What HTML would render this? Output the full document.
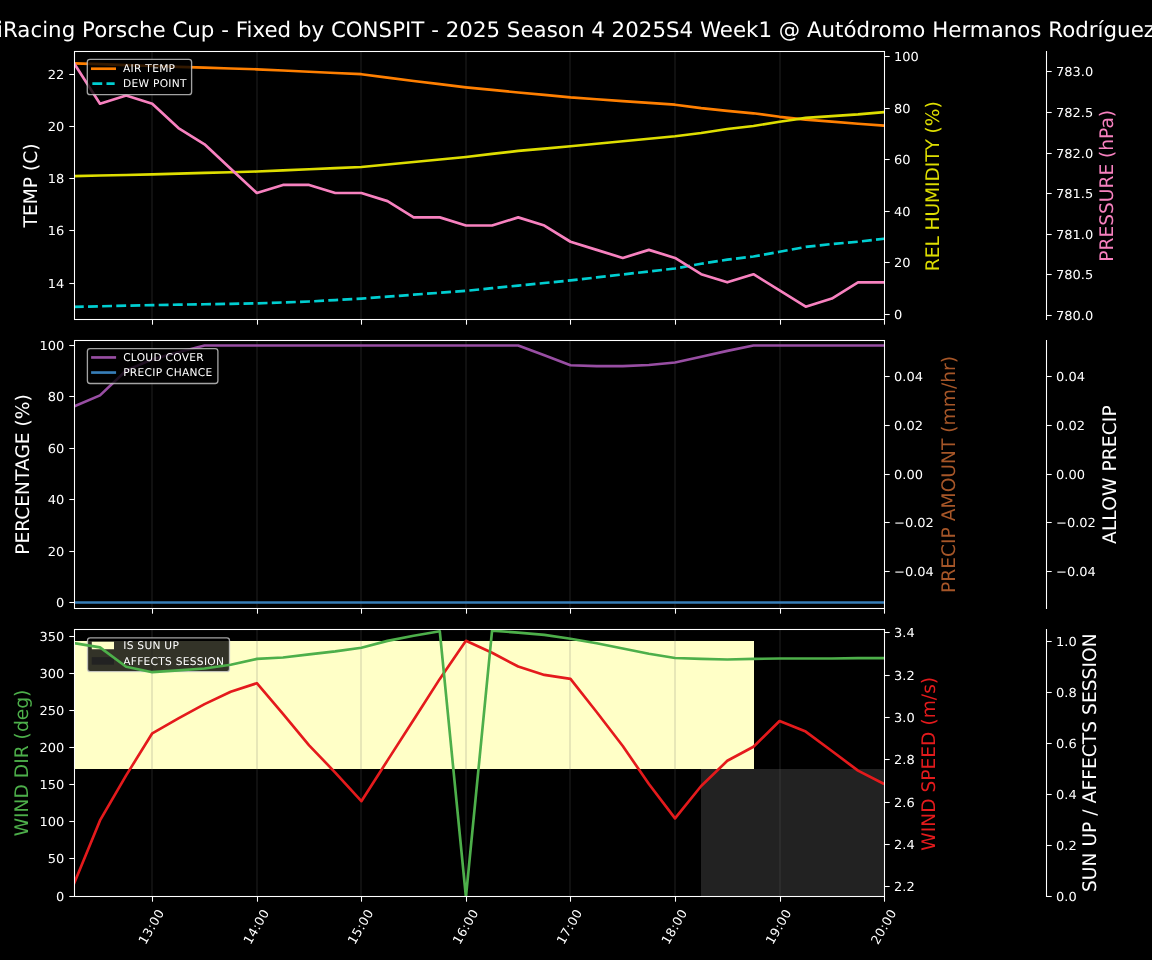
<!DOCTYPE html>
<html lang="en"><head><meta charset="utf-8"><title>Weather forecast chart</title>
<style>html,body{margin:0;padding:0;background:#000;}svg{display:block;will-change:transform;}text{text-rendering:geometricPrecision;}</style></head>
<body>
<svg width="1152" height="960" viewBox="0 0 1152 960" font-family="'DejaVu Sans','Liberation Sans',sans-serif">
<rect width="1152" height="960" fill="#000"/>
<defs>
<clipPath id="c0"><rect x="74.5" y="51.5" width="810.0" height="268.0"/></clipPath>
<clipPath id="c1"><rect x="74.5" y="340.5" width="810.0" height="268.0"/></clipPath>
<clipPath id="c2"><rect x="74.5" y="629.5" width="810.0" height="267.0"/></clipPath>
</defs>
<text x="-3.00" y="36.80" font-size="21.33" fill="#fff" text-anchor="start" textLength="1158" lengthAdjust="spacing">iRacing Porsche Cup - Fixed by CONSPIT - 2025 Season 4 2025S4 Week1 @ Autódromo Hermanos Rodríguez</text>
<line x1="152.00" y1="51.50" x2="152.00" y2="319.50" stroke="rgba(105,105,105,0.155)" stroke-width="2" />
<line x1="257.00" y1="51.50" x2="257.00" y2="319.50" stroke="rgba(105,105,105,0.155)" stroke-width="2" />
<line x1="361.00" y1="51.50" x2="361.00" y2="319.50" stroke="rgba(105,105,105,0.155)" stroke-width="2" />
<line x1="466.00" y1="51.50" x2="466.00" y2="319.50" stroke="rgba(105,105,105,0.155)" stroke-width="2" />
<line x1="570.00" y1="51.50" x2="570.00" y2="319.50" stroke="rgba(105,105,105,0.155)" stroke-width="2" />
<line x1="675.00" y1="51.50" x2="675.00" y2="319.50" stroke="rgba(105,105,105,0.155)" stroke-width="2" />
<line x1="780.00" y1="51.50" x2="780.00" y2="319.50" stroke="rgba(105,105,105,0.155)" stroke-width="2" />
<g clip-path="url(#c0)">
<polyline points="73.87,63.30 100.01,64.20 126.15,65.10 152.28,66.00 178.42,66.83 204.56,67.65 230.69,68.47 256.83,69.30 282.97,70.52 309.11,71.75 335.25,72.98 361.38,74.20 387.52,77.60 413.66,81.00 439.80,84.15 465.93,87.30 492.07,89.90 518.21,92.50 544.35,94.95 570.48,97.40 596.62,99.23 622.76,101.05 648.89,102.88 675.03,104.70 701.17,108.10 727.31,110.90 753.44,113.30 779.58,116.80 805.72,119.60 831.86,121.70 858.00,123.75 884.13,125.70" fill="none" stroke="#ff7f00" stroke-width="2.67" stroke-linejoin="round" />
<polyline points="73.87,306.90 100.01,306.30 126.15,305.70 152.28,305.10 178.42,304.68 204.56,304.25 230.69,303.82 256.83,303.40 282.97,302.45 309.11,301.50 335.25,300.05 361.38,298.60 387.52,296.65 413.66,294.70 439.80,292.75 465.93,290.80 492.07,288.20 518.21,285.60 544.35,283.00 570.48,280.40 596.62,277.42 622.76,274.45 648.89,271.48 675.03,268.50 701.17,263.75 727.31,259.60 753.44,256.50 779.58,251.80 805.72,246.90 831.86,244.00 858.00,241.70 884.13,238.75" fill="none" stroke="#00ced1" stroke-width="2.67" stroke-linejoin="round" stroke-dasharray="9.87 4.27"/>
<polyline points="73.87,176.10 100.01,175.53 126.15,174.97 152.28,174.40 178.42,173.68 204.56,172.95 230.69,172.22 256.83,171.50 282.97,170.38 309.11,169.25 335.25,168.12 361.38,167.00 387.52,164.50 413.66,162.00 439.80,159.50 465.93,157.00 492.07,153.95 518.21,150.90 544.35,148.57 570.48,146.25 596.62,143.75 622.76,141.25 648.89,138.75 675.03,136.25 701.17,132.95 727.31,129.00 753.44,126.00 779.58,121.70 805.72,117.85 831.86,116.10 858.00,114.40 884.13,112.10" fill="none" stroke="#dede00" stroke-width="2.67" stroke-linejoin="round" />
<polyline points="73.87,63.08 100.01,103.69 126.15,95.57 152.28,103.69 178.42,128.05 204.56,144.29 230.69,168.66 256.83,193.02 282.97,184.90 309.11,184.90 335.25,193.02 361.38,193.02 387.52,201.14 413.66,217.38 439.80,217.38 465.93,225.51 492.07,225.51 518.21,217.38 544.35,225.51 570.48,241.75 596.62,249.87 622.76,257.99 648.89,249.87 675.03,257.99 701.17,274.23 727.31,282.35 753.44,274.23 779.58,290.48 805.72,306.72 831.86,298.60 858.00,282.35 884.13,282.35" fill="none" stroke="#f781bf" stroke-width="2.67" stroke-linejoin="round" />
</g>
<rect x="74.5" y="51.5" width="810.0" height="268.0" fill="none" stroke="#fff" stroke-width="1.07"/>
<line x1="1046.50" y1="51.00" x2="1046.50" y2="320.00" stroke="#fff" stroke-width="1.07" />
<line x1="152.50" y1="319.50" x2="152.50" y2="324.70" stroke="#fff" stroke-width="1.07" />
<line x1="257.50" y1="319.50" x2="257.50" y2="324.70" stroke="#fff" stroke-width="1.07" />
<line x1="361.50" y1="319.50" x2="361.50" y2="324.70" stroke="#fff" stroke-width="1.07" />
<line x1="466.50" y1="319.50" x2="466.50" y2="324.70" stroke="#fff" stroke-width="1.07" />
<line x1="570.50" y1="319.50" x2="570.50" y2="324.70" stroke="#fff" stroke-width="1.07" />
<line x1="675.50" y1="319.50" x2="675.50" y2="324.70" stroke="#fff" stroke-width="1.07" />
<line x1="780.50" y1="319.50" x2="780.50" y2="324.70" stroke="#fff" stroke-width="1.07" />
<line x1="884.50" y1="319.50" x2="884.50" y2="324.70" stroke="#fff" stroke-width="1.07" />
<line x1="69.30" y1="283.50" x2="74.50" y2="283.50" stroke="#fff" stroke-width="1.07" />
<text transform="translate(64.37,288.10) scale(1,0.96)" font-size="13" fill="#fff" text-anchor="end">14</text>
<line x1="69.30" y1="230.50" x2="74.50" y2="230.50" stroke="#fff" stroke-width="1.07" />
<text transform="translate(64.37,235.10) scale(1,0.96)" font-size="13" fill="#fff" text-anchor="end">16</text>
<line x1="69.30" y1="178.50" x2="74.50" y2="178.50" stroke="#fff" stroke-width="1.07" />
<text transform="translate(64.37,183.10) scale(1,0.96)" font-size="13" fill="#fff" text-anchor="end">18</text>
<line x1="69.30" y1="126.50" x2="74.50" y2="126.50" stroke="#fff" stroke-width="1.07" />
<text transform="translate(64.37,131.10) scale(1,0.96)" font-size="13" fill="#fff" text-anchor="end">20</text>
<line x1="69.30" y1="74.50" x2="74.50" y2="74.50" stroke="#fff" stroke-width="1.07" />
<text transform="translate(64.37,79.10) scale(1,0.96)" font-size="13" fill="#fff" text-anchor="end">22</text>
<line x1="884.50" y1="314.50" x2="889.70" y2="314.50" stroke="#fff" stroke-width="1.07" />
<text transform="translate(894.03,319.10) scale(1,0.96)" font-size="13" fill="#fff" text-anchor="start">0</text>
<line x1="884.50" y1="262.50" x2="889.70" y2="262.50" stroke="#fff" stroke-width="1.07" />
<text transform="translate(894.03,267.10) scale(1,0.96)" font-size="13" fill="#fff" text-anchor="start">20</text>
<line x1="884.50" y1="211.50" x2="889.70" y2="211.50" stroke="#fff" stroke-width="1.07" />
<text transform="translate(894.03,216.10) scale(1,0.96)" font-size="13" fill="#fff" text-anchor="start">40</text>
<line x1="884.50" y1="159.50" x2="889.70" y2="159.50" stroke="#fff" stroke-width="1.07" />
<text transform="translate(894.03,164.10) scale(1,0.96)" font-size="13" fill="#fff" text-anchor="start">60</text>
<line x1="884.50" y1="108.50" x2="889.70" y2="108.50" stroke="#fff" stroke-width="1.07" />
<text transform="translate(894.03,113.10) scale(1,0.96)" font-size="13" fill="#fff" text-anchor="start">80</text>
<line x1="884.50" y1="56.50" x2="889.70" y2="56.50" stroke="#fff" stroke-width="1.07" />
<text transform="translate(894.03,61.10) scale(1,0.96)" font-size="13" fill="#fff" text-anchor="start">100</text>
<line x1="1046.50" y1="315.50" x2="1051.70" y2="315.50" stroke="#fff" stroke-width="1.07" />
<text transform="translate(1056.03,320.10) scale(1,0.96)" font-size="13" fill="#fff" text-anchor="start">780.0</text>
<line x1="1046.50" y1="274.50" x2="1051.70" y2="274.50" stroke="#fff" stroke-width="1.07" />
<text transform="translate(1056.03,279.10) scale(1,0.96)" font-size="13" fill="#fff" text-anchor="start">780.5</text>
<line x1="1046.50" y1="234.50" x2="1051.70" y2="234.50" stroke="#fff" stroke-width="1.07" />
<text transform="translate(1056.03,239.10) scale(1,0.96)" font-size="13" fill="#fff" text-anchor="start">781.0</text>
<line x1="1046.50" y1="193.50" x2="1051.70" y2="193.50" stroke="#fff" stroke-width="1.07" />
<text transform="translate(1056.03,198.10) scale(1,0.96)" font-size="13" fill="#fff" text-anchor="start">781.5</text>
<line x1="1046.50" y1="153.50" x2="1051.70" y2="153.50" stroke="#fff" stroke-width="1.07" />
<text transform="translate(1056.03,158.10) scale(1,0.96)" font-size="13" fill="#fff" text-anchor="start">782.0</text>
<line x1="1046.50" y1="112.50" x2="1051.70" y2="112.50" stroke="#fff" stroke-width="1.07" />
<text transform="translate(1056.03,117.10) scale(1,0.96)" font-size="13" fill="#fff" text-anchor="start">782.5</text>
<line x1="1046.50" y1="71.50" x2="1051.70" y2="71.50" stroke="#fff" stroke-width="1.07" />
<text transform="translate(1056.03,76.10) scale(1,0.96)" font-size="13" fill="#fff" text-anchor="start">783.0</text>
<text x="37.00" y="185.50" font-size="18.67" fill="#fff" text-anchor="middle" transform="rotate(-90 37.00 185.50)" >TEMP (C)</text>
<text x="939.00" y="186.25" font-size="18.67" fill="#dede00" text-anchor="middle" transform="rotate(-90 939.00 186.25)" letter-spacing="-0.094">REL HUMIDITY (%)</text>
<text x="1113.00" y="185.80" font-size="18.67" fill="#f781bf" text-anchor="middle" transform="rotate(-90 1113.00 185.80)" letter-spacing="-0.04">PRESSURE (hPa)</text>
<rect x="87.30" y="59.40" width="104.30" height="35.20" rx="2.7" ry="2.7" fill="rgba(0,0,0,0.8)" stroke="rgba(204,204,204,0.8)" stroke-width="1.33"/>
<line x1="92.35" y1="68.70" x2="114.65" y2="68.70" stroke="#ff7f00" stroke-width="2.67" stroke-linecap="square"/>
<text x="123.05" y="71.75" font-size="10.67" fill="#fff" text-anchor="start" letter-spacing="0.27">AIR TEMP</text>
<line x1="92.35" y1="83.60" x2="114.65" y2="83.60" stroke="#00ced1" stroke-width="2.67" stroke-dasharray="9.87 4.27"/>
<text x="123.05" y="86.65" font-size="10.67" fill="#fff" text-anchor="start" letter-spacing="0.27">DEW POINT</text>
<line x1="152.00" y1="340.50" x2="152.00" y2="608.50" stroke="rgba(105,105,105,0.155)" stroke-width="2" />
<line x1="257.00" y1="340.50" x2="257.00" y2="608.50" stroke="rgba(105,105,105,0.155)" stroke-width="2" />
<line x1="361.00" y1="340.50" x2="361.00" y2="608.50" stroke="rgba(105,105,105,0.155)" stroke-width="2" />
<line x1="466.00" y1="340.50" x2="466.00" y2="608.50" stroke="rgba(105,105,105,0.155)" stroke-width="2" />
<line x1="570.00" y1="340.50" x2="570.00" y2="608.50" stroke="rgba(105,105,105,0.155)" stroke-width="2" />
<line x1="675.00" y1="340.50" x2="675.00" y2="608.50" stroke="rgba(105,105,105,0.155)" stroke-width="2" />
<line x1="780.00" y1="340.50" x2="780.00" y2="608.50" stroke="rgba(105,105,105,0.155)" stroke-width="2" />
<g clip-path="url(#c1)">
<polyline points="73.87,406.41 100.01,395.36 126.15,370.43 152.28,359.38 178.42,352.18 204.56,345.50 230.69,345.50 256.83,345.50 282.97,345.50 309.11,345.50 335.25,345.50 361.38,345.50 387.52,345.50 413.66,345.50 439.80,345.50 465.93,345.50 492.07,345.50 518.21,345.50 544.35,355.27 570.48,365.29 596.62,366.06 622.76,366.06 648.89,365.03 675.03,362.46 701.17,356.81 727.31,350.90 753.44,345.50 779.58,345.50 805.72,345.50 831.86,345.50 858.00,345.50 884.13,345.50" fill="none" stroke="#984ea3" stroke-width="2.67" stroke-linejoin="round" />
<polyline points="73.87,602.50 884.13,602.50" fill="none" stroke="#377eb8" stroke-width="2.67" stroke-linejoin="round" />
</g>
<rect x="74.5" y="340.5" width="810.0" height="268.0" fill="none" stroke="#fff" stroke-width="1.07"/>
<line x1="1046.50" y1="340.00" x2="1046.50" y2="609.00" stroke="#fff" stroke-width="1.07" />
<line x1="152.50" y1="608.50" x2="152.50" y2="613.70" stroke="#fff" stroke-width="1.07" />
<line x1="257.50" y1="608.50" x2="257.50" y2="613.70" stroke="#fff" stroke-width="1.07" />
<line x1="361.50" y1="608.50" x2="361.50" y2="613.70" stroke="#fff" stroke-width="1.07" />
<line x1="466.50" y1="608.50" x2="466.50" y2="613.70" stroke="#fff" stroke-width="1.07" />
<line x1="570.50" y1="608.50" x2="570.50" y2="613.70" stroke="#fff" stroke-width="1.07" />
<line x1="675.50" y1="608.50" x2="675.50" y2="613.70" stroke="#fff" stroke-width="1.07" />
<line x1="780.50" y1="608.50" x2="780.50" y2="613.70" stroke="#fff" stroke-width="1.07" />
<line x1="884.50" y1="608.50" x2="884.50" y2="613.70" stroke="#fff" stroke-width="1.07" />
<line x1="69.30" y1="602.50" x2="74.50" y2="602.50" stroke="#fff" stroke-width="1.07" />
<text transform="translate(64.37,607.10) scale(1,0.96)" font-size="13" fill="#fff" text-anchor="end">0</text>
<line x1="69.30" y1="551.50" x2="74.50" y2="551.50" stroke="#fff" stroke-width="1.07" />
<text transform="translate(64.37,556.10) scale(1,0.96)" font-size="13" fill="#fff" text-anchor="end">20</text>
<line x1="69.30" y1="499.50" x2="74.50" y2="499.50" stroke="#fff" stroke-width="1.07" />
<text transform="translate(64.37,504.10) scale(1,0.96)" font-size="13" fill="#fff" text-anchor="end">40</text>
<line x1="69.30" y1="448.50" x2="74.50" y2="448.50" stroke="#fff" stroke-width="1.07" />
<text transform="translate(64.37,453.10) scale(1,0.96)" font-size="13" fill="#fff" text-anchor="end">60</text>
<line x1="69.30" y1="396.50" x2="74.50" y2="396.50" stroke="#fff" stroke-width="1.07" />
<text transform="translate(64.37,401.10) scale(1,0.96)" font-size="13" fill="#fff" text-anchor="end">80</text>
<line x1="69.30" y1="345.50" x2="74.50" y2="345.50" stroke="#fff" stroke-width="1.07" />
<text transform="translate(64.37,350.10) scale(1,0.96)" font-size="13" fill="#fff" text-anchor="end">100</text>
<line x1="884.50" y1="571.50" x2="889.70" y2="571.50" stroke="#fff" stroke-width="1.07" />
<text transform="translate(894.03,576.10) scale(1,0.96)" font-size="13" fill="#fff" text-anchor="start">−0.04</text>
<line x1="884.50" y1="522.50" x2="889.70" y2="522.50" stroke="#fff" stroke-width="1.07" />
<text transform="translate(894.03,527.10) scale(1,0.96)" font-size="13" fill="#fff" text-anchor="start">−0.02</text>
<line x1="884.50" y1="474.50" x2="889.70" y2="474.50" stroke="#fff" stroke-width="1.07" />
<text transform="translate(894.03,479.10) scale(1,0.96)" font-size="13" fill="#fff" text-anchor="start">0.00</text>
<line x1="884.50" y1="425.50" x2="889.70" y2="425.50" stroke="#fff" stroke-width="1.07" />
<text transform="translate(894.03,430.10) scale(1,0.96)" font-size="13" fill="#fff" text-anchor="start">0.02</text>
<line x1="884.50" y1="376.50" x2="889.70" y2="376.50" stroke="#fff" stroke-width="1.07" />
<text transform="translate(894.03,381.10) scale(1,0.96)" font-size="13" fill="#fff" text-anchor="start">0.04</text>
<line x1="1046.50" y1="571.50" x2="1051.70" y2="571.50" stroke="#fff" stroke-width="1.07" />
<text transform="translate(1056.03,576.10) scale(1,0.96)" font-size="13" fill="#fff" text-anchor="start">−0.04</text>
<line x1="1046.50" y1="522.50" x2="1051.70" y2="522.50" stroke="#fff" stroke-width="1.07" />
<text transform="translate(1056.03,527.10) scale(1,0.96)" font-size="13" fill="#fff" text-anchor="start">−0.02</text>
<line x1="1046.50" y1="474.50" x2="1051.70" y2="474.50" stroke="#fff" stroke-width="1.07" />
<text transform="translate(1056.03,479.10) scale(1,0.96)" font-size="13" fill="#fff" text-anchor="start">0.00</text>
<line x1="1046.50" y1="425.50" x2="1051.70" y2="425.50" stroke="#fff" stroke-width="1.07" />
<text transform="translate(1056.03,430.10) scale(1,0.96)" font-size="13" fill="#fff" text-anchor="start">0.02</text>
<line x1="1046.50" y1="376.50" x2="1051.70" y2="376.50" stroke="#fff" stroke-width="1.07" />
<text transform="translate(1056.03,381.10) scale(1,0.96)" font-size="13" fill="#fff" text-anchor="start">0.04</text>
<text x="29.00" y="474.50" font-size="18.67" fill="#fff" text-anchor="middle" transform="rotate(-90 29.00 474.50)" >PERCENTAGE (%)</text>
<text x="955.00" y="474.50" font-size="18.67" fill="#a65628" text-anchor="middle" transform="rotate(-90 955.00 474.50)" >PRECIP AMOUNT (mm/hr)</text>
<text x="1115.60" y="474.60" font-size="18.67" fill="#fff" text-anchor="middle" transform="rotate(-90 1115.60 474.60)" letter-spacing="0.08">ALLOW PRECIP</text>
<rect x="87.40" y="348.60" width="130.50" height="34.90" rx="2.7" ry="2.7" fill="rgba(0,0,0,0.8)" stroke="rgba(204,204,204,0.8)" stroke-width="1.33"/>
<line x1="92.45" y1="357.45" x2="114.75" y2="357.45" stroke="#984ea3" stroke-width="2.67" stroke-linecap="square"/>
<text x="123.15" y="360.80" font-size="10.67" fill="#fff" text-anchor="start" letter-spacing="0.27">CLOUD COVER</text>
<line x1="92.45" y1="372.55" x2="114.75" y2="372.55" stroke="#377eb8" stroke-width="2.67" stroke-linecap="square"/>
<text x="123.15" y="375.80" font-size="10.67" fill="#fff" text-anchor="start" letter-spacing="0.27">PRECIP CHANCE</text>
<rect x="74" y="641" width="680" height="128" fill="#ffffc7"/>
<rect x="701" y="769" width="183.5" height="127.5" fill="#222"/>
<line x1="152.00" y1="629.50" x2="152.00" y2="896.50" stroke="rgba(105,105,105,0.155)" stroke-width="2" />
<line x1="257.00" y1="629.50" x2="257.00" y2="896.50" stroke="rgba(105,105,105,0.155)" stroke-width="2" />
<line x1="361.00" y1="629.50" x2="361.00" y2="896.50" stroke="rgba(105,105,105,0.155)" stroke-width="2" />
<line x1="466.00" y1="629.50" x2="466.00" y2="896.50" stroke="rgba(105,105,105,0.155)" stroke-width="2" />
<line x1="570.00" y1="629.50" x2="570.00" y2="896.50" stroke="rgba(105,105,105,0.155)" stroke-width="2" />
<line x1="675.00" y1="629.50" x2="675.00" y2="896.50" stroke="rgba(105,105,105,0.155)" stroke-width="2" />
<line x1="780.00" y1="629.50" x2="780.00" y2="896.50" stroke="rgba(105,105,105,0.155)" stroke-width="2" />
<rect x="87.50" y="637.80" width="142.00" height="33.80" rx="2.7" ry="2.7" fill="rgba(0,0,0,0.8)" stroke="rgba(204,204,204,0.8)" stroke-width="1.33"/>
<rect x="91.80" y="641.77" width="22.2" height="7.47" fill="#ffffc7"/>
<text x="123.25" y="648.75" font-size="10.67" fill="#fff" text-anchor="start" letter-spacing="0.27">IS SUN UP</text>
<rect x="91.80" y="657.17" width="22.2" height="7.47" fill="#222"/>
<text x="123.25" y="665.10" font-size="10.67" fill="#fff" text-anchor="start" letter-spacing="0.27">AFFECTS SESSION</text>
<g clip-path="url(#c2)">
<polyline points="73.87,884.00 100.01,820.40 126.15,775.40 152.28,733.30 178.42,718.40 204.56,704.10 230.69,691.80 256.83,683.20 282.97,713.80 309.11,745.30 335.25,772.60 361.38,801.20 387.52,760.40 413.66,719.70 439.80,678.90 465.93,640.80 492.07,652.80 518.21,666.50 544.35,674.90 570.48,678.90 596.62,712.00 622.76,746.00 648.89,784.00 675.03,818.40 701.17,786.00 727.31,760.80 753.44,746.80 779.58,721.00 805.72,731.60 831.86,751.00 858.00,770.60 884.13,784.00" fill="none" stroke="#e41a1c" stroke-width="2.67" stroke-linejoin="round" />
<polyline points="73.87,643.00 100.01,647.40 126.15,666.80 152.28,672.20 178.42,670.45 204.56,668.50 230.69,664.70 256.83,658.90 282.97,657.50 309.11,654.40 335.25,651.35 361.38,647.70 387.52,640.90 413.66,635.70 439.80,631.30 465.93,897.00 492.07,630.60 518.21,632.60 544.35,634.90 570.48,638.75 596.62,643.30 622.76,648.50 648.89,653.70 675.03,658.00 701.17,658.90 727.31,659.50 753.44,658.90 779.58,658.50 805.72,658.50 831.86,658.50 858.00,658.10 884.13,658.10" fill="none" stroke="#4daf4a" stroke-width="2.67" stroke-linejoin="round" />
</g>
<rect x="74.5" y="629.5" width="810.0" height="267.0" fill="none" stroke="#fff" stroke-width="1.07"/>
<line x1="1046.50" y1="629.00" x2="1046.50" y2="897.00" stroke="#fff" stroke-width="1.07" />
<line x1="152.50" y1="896.50" x2="152.50" y2="901.70" stroke="#fff" stroke-width="1.07" />
<line x1="257.50" y1="896.50" x2="257.50" y2="901.70" stroke="#fff" stroke-width="1.07" />
<line x1="361.50" y1="896.50" x2="361.50" y2="901.70" stroke="#fff" stroke-width="1.07" />
<line x1="466.50" y1="896.50" x2="466.50" y2="901.70" stroke="#fff" stroke-width="1.07" />
<line x1="570.50" y1="896.50" x2="570.50" y2="901.70" stroke="#fff" stroke-width="1.07" />
<line x1="675.50" y1="896.50" x2="675.50" y2="901.70" stroke="#fff" stroke-width="1.07" />
<line x1="780.50" y1="896.50" x2="780.50" y2="901.70" stroke="#fff" stroke-width="1.07" />
<line x1="884.50" y1="896.50" x2="884.50" y2="901.70" stroke="#fff" stroke-width="1.07" />
<line x1="69.30" y1="896.50" x2="74.50" y2="896.50" stroke="#fff" stroke-width="1.07" />
<text transform="translate(64.37,901.10) scale(1,0.96)" font-size="13" fill="#fff" text-anchor="end">0</text>
<line x1="69.30" y1="858.50" x2="74.50" y2="858.50" stroke="#fff" stroke-width="1.07" />
<text transform="translate(64.37,863.10) scale(1,0.96)" font-size="13" fill="#fff" text-anchor="end">50</text>
<line x1="69.30" y1="821.50" x2="74.50" y2="821.50" stroke="#fff" stroke-width="1.07" />
<text transform="translate(64.37,826.10) scale(1,0.96)" font-size="13" fill="#fff" text-anchor="end">100</text>
<line x1="69.30" y1="784.50" x2="74.50" y2="784.50" stroke="#fff" stroke-width="1.07" />
<text transform="translate(64.37,789.10) scale(1,0.96)" font-size="13" fill="#fff" text-anchor="end">150</text>
<line x1="69.30" y1="747.50" x2="74.50" y2="747.50" stroke="#fff" stroke-width="1.07" />
<text transform="translate(64.37,752.10) scale(1,0.96)" font-size="13" fill="#fff" text-anchor="end">200</text>
<line x1="69.30" y1="710.50" x2="74.50" y2="710.50" stroke="#fff" stroke-width="1.07" />
<text transform="translate(64.37,715.10) scale(1,0.96)" font-size="13" fill="#fff" text-anchor="end">250</text>
<line x1="69.30" y1="673.50" x2="74.50" y2="673.50" stroke="#fff" stroke-width="1.07" />
<text transform="translate(64.37,678.10) scale(1,0.96)" font-size="13" fill="#fff" text-anchor="end">300</text>
<line x1="69.30" y1="636.50" x2="74.50" y2="636.50" stroke="#fff" stroke-width="1.07" />
<text transform="translate(64.37,641.10) scale(1,0.96)" font-size="13" fill="#fff" text-anchor="end">350</text>
<line x1="884.50" y1="886.50" x2="889.70" y2="886.50" stroke="#fff" stroke-width="1.07" />
<text transform="translate(894.03,891.10) scale(1,0.96)" font-size="13" fill="#fff" text-anchor="start">2.2</text>
<line x1="884.50" y1="844.50" x2="889.70" y2="844.50" stroke="#fff" stroke-width="1.07" />
<text transform="translate(894.03,849.10) scale(1,0.96)" font-size="13" fill="#fff" text-anchor="start">2.4</text>
<line x1="884.50" y1="802.50" x2="889.70" y2="802.50" stroke="#fff" stroke-width="1.07" />
<text transform="translate(894.03,807.10) scale(1,0.96)" font-size="13" fill="#fff" text-anchor="start">2.6</text>
<line x1="884.50" y1="759.50" x2="889.70" y2="759.50" stroke="#fff" stroke-width="1.07" />
<text transform="translate(894.03,764.10) scale(1,0.96)" font-size="13" fill="#fff" text-anchor="start">2.8</text>
<line x1="884.50" y1="717.50" x2="889.70" y2="717.50" stroke="#fff" stroke-width="1.07" />
<text transform="translate(894.03,722.10) scale(1,0.96)" font-size="13" fill="#fff" text-anchor="start">3.0</text>
<line x1="884.50" y1="675.50" x2="889.70" y2="675.50" stroke="#fff" stroke-width="1.07" />
<text transform="translate(894.03,680.10) scale(1,0.96)" font-size="13" fill="#fff" text-anchor="start">3.2</text>
<line x1="884.50" y1="632.50" x2="889.70" y2="632.50" stroke="#fff" stroke-width="1.07" />
<text transform="translate(894.03,637.10) scale(1,0.96)" font-size="13" fill="#fff" text-anchor="start">3.4</text>
<line x1="1046.50" y1="896.50" x2="1051.70" y2="896.50" stroke="#fff" stroke-width="1.07" />
<text transform="translate(1056.03,901.10) scale(1,0.96)" font-size="13" fill="#fff" text-anchor="start">0.0</text>
<line x1="1046.50" y1="845.50" x2="1051.70" y2="845.50" stroke="#fff" stroke-width="1.07" />
<text transform="translate(1056.03,850.10) scale(1,0.96)" font-size="13" fill="#fff" text-anchor="start">0.2</text>
<line x1="1046.50" y1="794.50" x2="1051.70" y2="794.50" stroke="#fff" stroke-width="1.07" />
<text transform="translate(1056.03,799.10) scale(1,0.96)" font-size="13" fill="#fff" text-anchor="start">0.4</text>
<line x1="1046.50" y1="743.50" x2="1051.70" y2="743.50" stroke="#fff" stroke-width="1.07" />
<text transform="translate(1056.03,748.10) scale(1,0.96)" font-size="13" fill="#fff" text-anchor="start">0.6</text>
<line x1="1046.50" y1="692.50" x2="1051.70" y2="692.50" stroke="#fff" stroke-width="1.07" />
<text transform="translate(1056.03,697.10) scale(1,0.96)" font-size="13" fill="#fff" text-anchor="start">0.8</text>
<line x1="1046.50" y1="641.50" x2="1051.70" y2="641.50" stroke="#fff" stroke-width="1.07" />
<text transform="translate(1056.03,646.10) scale(1,0.96)" font-size="13" fill="#fff" text-anchor="start">1.0</text>
<text x="28.00" y="763.00" font-size="18.67" fill="#4daf4a" text-anchor="middle" transform="rotate(-90 28.00 763.00)" >WIND DIR (deg)</text>
<text x="935.00" y="763.80" font-size="18.67" fill="#e41a1c" text-anchor="middle" transform="rotate(-90 935.00 763.80)" >WIND SPEED (m/s)</text>
<text x="1096.00" y="762.70" font-size="18.67" fill="#fff" text-anchor="middle" transform="rotate(-90 1096.00 762.70)" letter-spacing="0.025">SUN UP / AFFECTS SESSION</text>
<text transform="translate(151.08,926.50) rotate(-60)" x="0" y="4.55" font-size="12.5" letter-spacing="0.45" fill="#fff" text-anchor="middle">13:00</text>
<text transform="translate(256.13,926.50) rotate(-60)" x="0" y="4.55" font-size="12.5" letter-spacing="0.45" fill="#fff" text-anchor="middle">14:00</text>
<text transform="translate(360.38,926.50) rotate(-60)" x="0" y="4.55" font-size="12.5" letter-spacing="0.45" fill="#fff" text-anchor="middle">15:00</text>
<text transform="translate(465.33,926.50) rotate(-60)" x="0" y="4.55" font-size="12.5" letter-spacing="0.45" fill="#fff" text-anchor="middle">16:00</text>
<text transform="translate(569.28,926.50) rotate(-60)" x="0" y="4.55" font-size="12.5" letter-spacing="0.45" fill="#fff" text-anchor="middle">17:00</text>
<text transform="translate(674.13,926.50) rotate(-60)" x="0" y="4.55" font-size="12.5" letter-spacing="0.45" fill="#fff" text-anchor="middle">18:00</text>
<text transform="translate(778.38,926.50) rotate(-60)" x="0" y="4.55" font-size="12.5" letter-spacing="0.45" fill="#fff" text-anchor="middle">19:00</text>
<text transform="translate(883.53,926.50) rotate(-60)" x="0" y="4.55" font-size="12.5" letter-spacing="0.45" fill="#fff" text-anchor="middle">20:00</text>
</svg>
</body></html>
